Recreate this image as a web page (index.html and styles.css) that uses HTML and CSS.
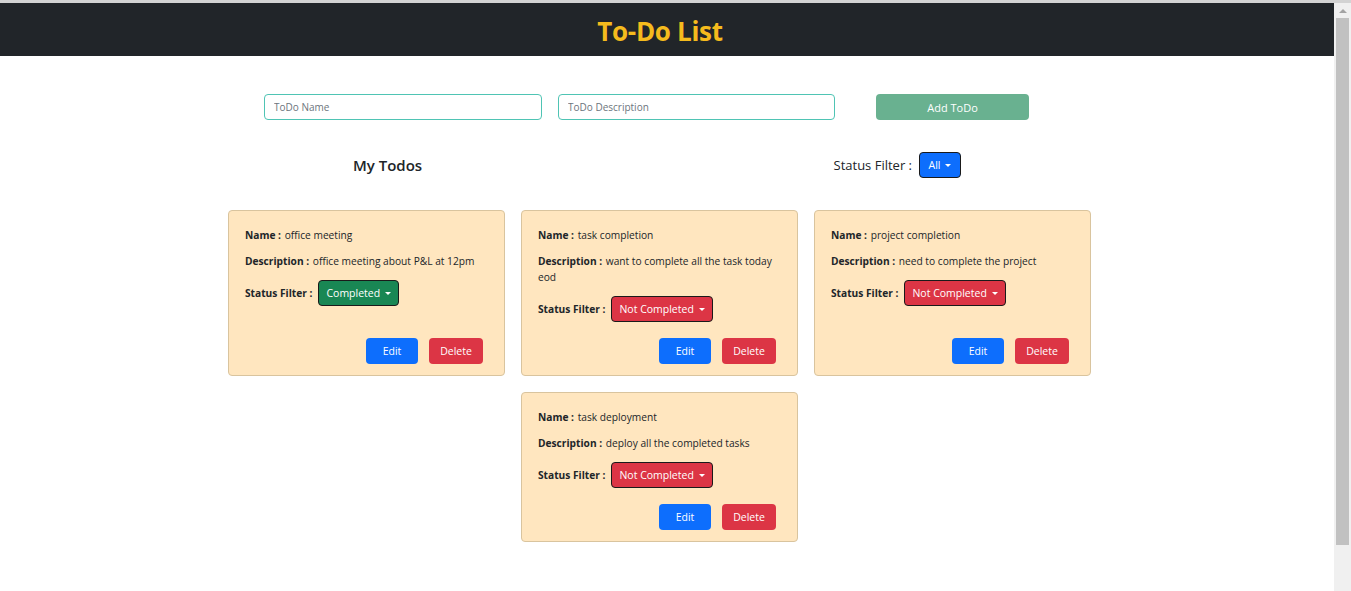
FILE: index.html
```html
<!DOCTYPE html>
<html lang="en">
<head>
<meta charset="utf-8">
<title>To-Do List</title>
<link rel="stylesheet" href="styles.css">
</head>
<body>
<div class="topline"></div>
<div class="window">
  <div class="app">
    <header class="navbar">
      <h1 class="brand">To-Do List</h1>
    </header>
    <main class="page">
      <section class="add-row">
        <input class="field field-name" type="text" placeholder="ToDo Name">
        <input class="field field-desc" type="text" placeholder="ToDo Description">
        <button class="btn btn-add" type="button">Add ToDo</button>
      </section>
      <section class="filter-row">
        <h2 class="section-title">My Todos</h2>
        <div class="filter">
          <span class="filter-label">Status Filter :</span>
          <button class="btn btn-primary dropdown" type="button">All<span class="caret"></span></button>
        </div>
      </section>
      <section class="cards">
        <article class="card">
          <p class="line"><b class="key">Name :</b> office meeting</p>
          <p class="line"><b class="key">Description :</b> office meeting about P&amp;L at 12pm</p>
          <div class="status"><b class="key">Status Filter :</b><button class="btn btn-success dropdown bordered" type="button">Completed<span class="caret"></span></button></div>
          <div class="actions"><button class="btn btn-primary act-edit" type="button">Edit</button><button class="btn btn-danger act-del" type="button">Delete</button></div>
        </article>
        <article class="card">
          <p class="line"><b class="key">Name :</b> task completion</p>
          <p class="line"><b class="key">Description :</b> want to complete all the task today eod</p>
          <div class="status"><b class="key">Status Filter :</b><button class="btn btn-danger dropdown bordered" type="button">Not Completed<span class="caret"></span></button></div>
          <div class="actions"><button class="btn btn-primary act-edit" type="button">Edit</button><button class="btn btn-danger act-del" type="button">Delete</button></div>
        </article>
        <article class="card">
          <p class="line"><b class="key">Name :</b> project completion</p>
          <p class="line"><b class="key">Description :</b> need to complete the project</p>
          <div class="status"><b class="key">Status Filter :</b><button class="btn btn-danger dropdown bordered" type="button">Not Completed<span class="caret"></span></button></div>
          <div class="actions"><button class="btn btn-primary act-edit" type="button">Edit</button><button class="btn btn-danger act-del" type="button">Delete</button></div>
        </article>
        <article class="card">
          <p class="line"><b class="key">Name :</b> task deployment</p>
          <p class="line"><b class="key">Description :</b> deploy all the completed tasks</p>
          <div class="status"><b class="key">Status Filter :</b><button class="btn btn-danger dropdown bordered" type="button">Not Completed<span class="caret"></span></button></div>
          <div class="actions"><button class="btn btn-primary act-edit" type="button">Edit</button><button class="btn btn-danger act-del" type="button">Delete</button></div>
        </article>
      </section>
    </main>
  </div>
  <div class="scrollbar">
    <span class="scroll-arrow"></span>
    <span class="scroll-thumb"></span>
  </div>
</div>
</body>
</html>
```
FILE: styles.css
```css
* { box-sizing: border-box; }
html, body { margin: 0; padding: 0; }
body {
  font-family: "Open Sans", "Noto Sans", sans-serif;
  color: #212529;
  background: #fff;
  height: 591px;
  overflow: hidden;
}
.topline { height: 3px; background: #d3d3d3; }
.window {
  display: flex;
  height: 588px;
}
.app {
  flex: 1;
  min-width: 0;
}
.scrollbar {
  width: 17px;
  background: #f0f0f0;
  display: flex;
  flex-direction: column;
  align-items: center;
}
.scroll-arrow {
  margin-top: 6px;
  width: 0;
  height: 0;
  border-left: 4px solid transparent;
  border-right: 4px solid transparent;
  border-bottom: 4px solid #a3a3a3;
}
.scroll-thumb {
  margin-top: 5px;
  width: 13px;
  height: 527px;
  background: #c1c1c1;
}
.navbar {
  height: 53px;
  background: #212529;
  display: flex;
  align-items: center;
  justify-content: center;
  padding-right: 14px;
  padding-top: 2px;
}
.brand {
  margin: 0;
  font-size: 26px;
  font-weight: 700;
  color: #f5bb1d;
  letter-spacing: -0.3px;
}
.page {
  width: 863px;
  margin: 0 0 0 228px;
}
.add-row {
  display: flex;
  align-items: center;
  margin-top: 38px;
  padding-left: 36px;
}
.field {
  height: 26px;
  border: 1px solid #4fc4b4;
  border-radius: 4px;
  padding: 0 9px;
  font-family: inherit;
  font-size: 10px;
  color: #212529;
  outline: none;
}
.field::placeholder { color: #6c757d; }
.field-name { width: 278px; }
.field-desc { width: 277px; margin-left: 16px; }
.btn {
  font-family: inherit;
  border: 1px solid transparent;
  border-radius: 4px;
  color: #fff;
  font-size: 10.5px;
  height: 26px;
  padding: 0 10px;
  display: inline-flex;
  align-items: center;
  justify-content: center;
  cursor: pointer;
}
.btn-add {
  width: 153px;
  margin-left: 41px;
  background: #69b190;
  font-size: 11px;
}
.btn-primary { background: #0d6efd; }
.btn-success { background: #198754; }
.btn-danger { background: #dc3545; }
.bordered { border-color: #1a1a1a; }
.filter-row {
  display: flex;
  align-items: center;
  justify-content: space-between;
  margin-top: 32px;
  padding: 0 130px 0 125px;
  height: 26px;
}
.section-title {
  margin: 0;
  font-size: 15px;
  font-weight: 600;
}
.filter { display: flex; align-items: center; }
.filter-label { font-size: 13px; margin-right: 7px; }
.filter .dropdown { width: 42px; padding: 0 6px; border-color: #1a1a1a; }
.caret {
  display: inline-block;
  margin-left: 5px;
  width: 0;
  height: 0;
  border-left: 3px solid transparent;
  border-right: 3px solid transparent;
  border-top: 3px solid #fff;
}
.cards {
  display: flex;
  flex-wrap: wrap;
  justify-content: center;
  gap: 16px;
  margin-top: 32px;
}
.card {
  width: 277px;
  background: #ffe6bf;
  border: 1px solid #d9c49e;
  border-radius: 4px;
  padding: 16px 21px 11px 16px;
  display: flex;
  flex-direction: column;
  font-size: 10.2px;
  line-height: 16px;
}
.line { margin: 0 0 10px; }
.key { font-weight: 700; margin-right: 1px; }
.status { display: flex; align-items: center; margin-top: 1px; }
.status .dropdown { margin-left: 5px; padding: 0 7px; }
.actions {
  margin-top: auto;
  padding-top: 16px;
  display: flex;
  justify-content: flex-end;
  gap: 11px;
}
.act-edit { width: 52px; }
.act-del { width: 54px; }
```
